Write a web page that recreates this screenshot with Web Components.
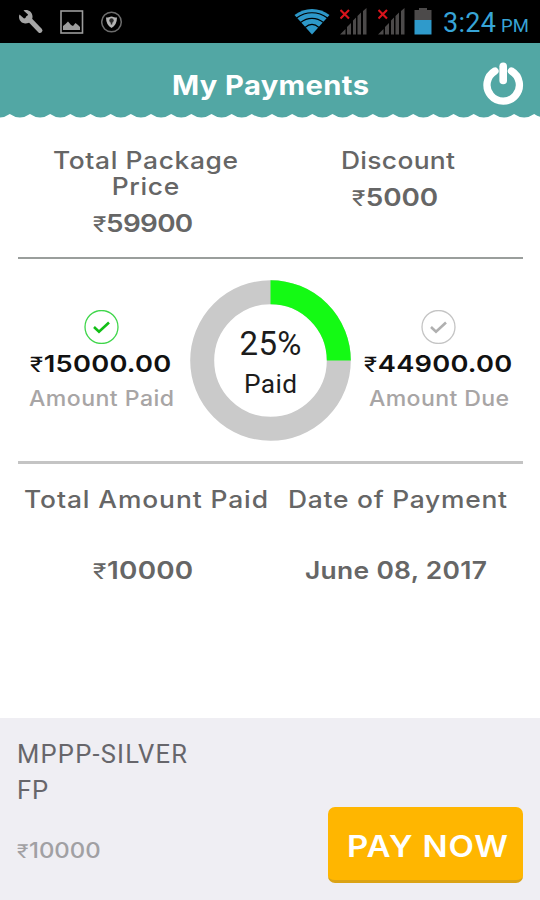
<!DOCTYPE html>
<html lang="en">
<head>
<meta charset="utf-8">
<title>My Payments</title>
<style>
  body {
    margin: 0;
    background: #fff;
    font-family: Inter, "Liberation Sans", sans-serif;
    color: #666;
  }
</style>
</head>
<body>
<payments-page></payments-page>

<script>
// A short text, tracked out so that its longest line fills the given width
class FitText extends HTMLElement {
  constructor() {
    super();
    this.attachShadow({ mode: 'open' });
  }

  connectedCallback() {
    const width = Number(this.getAttribute('width'));
    const stretch = Number(this.getAttribute('stretch') || 1);
    this.shadowRoot.innerHTML = `
      <style>
        :host {
          display: block;
          width: ${width}px;
          text-align: center;
        }
        div { display: flex; }
        span {
          display: block;
          flex: none;
          white-space: pre;
          transform: scaleX(${stretch});
          transform-origin: 0 50%;
        }
      </style>
      <div><span><slot></slot></span></div>
    `;
    const span = this.shadowRoot.querySelector('span');
    const longest = Math.max(...this.textContent.split('\n').map(line => line.length));
    const natural = span.getBoundingClientRect().width / stretch;
    span.style.letterSpacing = (width / stretch - natural) / (longest - 1) + 'px';
  }
}

// Currency sign, lighter and smaller than the digits
class RupeeSign extends HTMLElement {
  constructor() {
    super();
    this.attachShadow({ mode: 'open' });
  }

  connectedCallback() {
    this.shadowRoot.innerHTML = `<style>
        :host {
          margin-right: 0.5px;
          font-family: Roboto, "Noto Sans", sans-serif;
          font-size: 0.92em;
          font-weight: 400;
        }
      </style><slot></slot>`;
  }
}

class StatusBar extends HTMLElement {
  constructor() {
    super();
    this.attachShadow({ mode: 'open' });
  }

  connectedCallback() {
    const signal = `
      <svg width="28" height="28" viewBox="0 0 28 28">
        <path d="M0 26.500L5.500 21V26.500ZM7 19L11 15V26.500H7ZM13 12.500L16 9.500V26.500H13ZM17.500 8L21 4.500V26.500H17.500ZM23 3L26.500 0V26.500H23Z" fill="#4c4a4a"/>
        <path d="M0.500 2L9 10.500M9 2L0.500 10.500" stroke="#d8141c" stroke-width="2.100"/>
      </svg>`;

    this.shadowRoot.innerHTML = `
      <style>
        :host {
          display: flex;
          box-sizing: border-box;
          height: 43px;
          padding: 0 11px 0 18px;
          background: #000;
          color: #37a4d6;
          font-family: Roboto, sans-serif;
        }
        svg { display: block; margin-top: 8px; }
        .left, .right { display: flex; }
        .left { gap: 16px; }
        .right { margin-left: auto; }
        .time { display: flex; align-items: baseline; line-height: 46px; font-size: 27px; }
        .pm { font-size: 18.500px; margin-left: 5px; }
      </style>
      <div class="left">
        <svg width="26" height="28" viewBox="0 0 26 28">
          <path d="M10 10L22 22.500" stroke="#a6a6a6" stroke-width="4.800" stroke-linecap="round"/>
          <path d="M5.500 2.500L10 6.500L9 9.500L6 10.500L1.500 6.500C0 10 2 15 7 15.500C11 16 15 12 14.500 8C14 3.500 9.500 1 5.500 2.500Z" fill="#a6a6a6"/>
        </svg>
        <svg width="24" height="28" viewBox="0 0 24 28">
          <rect x="1" y="3" width="21.500" height="22" fill="none" stroke="#9c9c9c" stroke-width="1.600"/>
          <path d="M3 22V18L5.500 16L8 13.500L11 17L13 18L15.500 15L18 17L20 19V22Z" fill="#9c9c9c"/>
        </svg>
        <svg width="24" height="28" viewBox="0 0 24 28" style="margin-left: 1px">
          <circle cx="10.500" cy="14" r="9.800" fill="none" stroke="#6c6c6c" stroke-width="1.500"/>
          <path d="M5 9.500C7 9.500 9 9 10.500 8.500C12 9 14 9.500 16 9.500C16 14.500 14 18 10.500 20C7 18 5 14.500 5 9.500Z" fill="#b4b4b4"/>
          <circle cx="10.500" cy="12.500" r="2.200" fill="#2c2c2c"/>
          <path d="M10.500 12.500V16.500" stroke="#2c2c2c" stroke-width="1.500"/>
        </svg>
      </div>
      <div class="right">
        <svg width="36" height="28" viewBox="0 0 36 28" style="margin-right: 10px">
          <path d="M0.500 7C10.500 -1 25.500 -1 35.500 7L18 26.500Z" fill="#2d98c9"/>
          <path d="M2.500 10C12 3 24 3 33.500 10M6.500 14.500C13.500 9 22.500 9 29.500 14.500M11 19.500C15.500 15.500 20.500 15.500 25 19.500" fill="none" stroke="#000" stroke-width="1.200"/>
        </svg>
        ${signal}
        <div style="width: 10px"></div>
        ${signal}
        <svg width="18" height="28" viewBox="0 0 18 28" style="margin: 8px 11px 0 8px">
          <path d="M0.500 2H5V0H13V2H17.500V12H0.500Z" fill="#4c4a4a"/>
          <path d="M0.500 12H17.500V26.500H0.500Z" fill="#2f9acb"/>
        </svg>
        <div class="time"><fit-text width="53">3:24</fit-text><fit-text class="pm" width="28">PM</fit-text></div>
      </div>
    `;
  }
}

class PageHeader extends HTMLElement {
  constructor() {
    super();
    this.attachShadow({ mode: 'open' });
  }

  connectedCallback() {
    // Scalloped bottom edge, one arc every 20px or so
    const step = 20.170;
    let edge = `M${9.800 - step} 0V1`;
    for (let i = 0; i < 28; i++) {
      const x = 9.800 + step * i;
      edge += `Q${x - step / 2} 8 ${x} 1`;
    }
    edge += 'V0Z';

    this.shadowRoot.innerHTML = `
      <style>
        :host { display: block; height: 75px; }
        .bar {
          display: grid;
          grid-template-columns: 60px 1fr 60px;
          align-items: center;
          justify-items: center;
          box-sizing: border-box;
          height: 70px;
          padding-top: 14px;
          background: #52a7a4;
          color: #fff;
          font-size: 26.500px;
          font-weight: 700;
          line-height: 56px;
        }
        .bar fit-text { grid-column: 2; }
        svg { display: block; }
        .power { margin-right: 14px; margin-top: -3px; }
      </style>
      <div class="bar">
        <fit-text width="197" stretch="1.100">${this.textContent}</fit-text>
        <svg class="power" width="44" height="46" viewBox="0 0 44 46">
          <path d="M14 10A16.200 16.200 0 1 0 30.400 10" fill="none" stroke="#fff" stroke-width="7.300" stroke-linecap="round"/>
          <path d="M22.200 5.300V19.500" stroke="#fff" stroke-width="7.600" stroke-linecap="round"/>
        </svg>
      </div>
      <svg width="540" height="5" viewBox="0 0 540 5"><path d="${edge}" fill="#52a7a4"/></svg>
    `;
  }
}

class CheckBadge extends HTMLElement {
  constructor() {
    super();
    this.attachShadow({ mode: 'open' });
  }

  connectedCallback() {
    const done = this.hasAttribute('done');
    this.shadowRoot.innerHTML = `
      <style>
        :host { display: block; height: 34px; }
        svg { display: block; }
      </style>
      <svg width="36" height="34" viewBox="0 0 36 34">
        <circle cx="17.500" cy="17" r="16.500" fill="none" stroke="${done ? '#3fd64b' : '#c4c4c4'}" stroke-width="1.300"/>
        <path d="M10 17L15 21.700L25 12.500" fill="none" stroke="${done ? '#12bf16' : '#b0b0b0'}" stroke-width="2.600"/>
      </svg>
    `;
  }
}

class PaidDonut extends HTMLElement {
  constructor() {
    super();
    this.attachShadow({ mode: 'open' });
  }

  connectedCallback() {
    const percent = Number(this.getAttribute('percent'));
    this.shadowRoot.innerHTML = `
      <style>
        :host {
          display: grid;
          width: 161px;
          height: 161px;
          color: #1c1c1c;
          font-family: Roboto, sans-serif;
        }
        svg, .label { grid-area: 1 / 1; }
        .label {
          display: flex;
          flex-direction: column;
          align-items: center;
          padding-top: 43px;
        }
        .percent { font-size: 33px; line-height: 42px; }
        .caption { font-size: 25px; line-height: 40px; }
      </style>
      <svg width="161" height="161" viewBox="0 0 161 161">
        <circle cx="80.500" cy="80.500" r="68.300" fill="none" stroke="#cacaca" stroke-width="24"/>
        <circle cx="80.500" cy="80.500" r="68.300" fill="none" stroke="#14fa14" stroke-width="24"
          pathLength="100" stroke-dasharray="${percent} 100" transform="rotate(-90 80.500 80.500)"/>
      </svg>
      <div class="label">
        <fit-text class="percent" width="62">${percent}%</fit-text>
        <fit-text class="caption" width="53" stretch="1.050">Paid</fit-text>
      </div>
    `;
  }
}

class PayButton extends HTMLElement {
  constructor() {
    super();
    this.attachShadow({ mode: 'open' });
  }

  connectedCallback() {
    this.shadowRoot.innerHTML = `
      <style>
        :host { display: block; }
        button {
          display: flex;
          justify-content: center;
          width: 195px;
          height: 76px;
          padding: 0 0 0 4px;
          border: none;
          border-bottom: 3px solid #dba315;
          border-radius: 7px;
          background: #ffb600;
          color: #fff;
          font: 600 29.500px/79px Inter, sans-serif;
          cursor: pointer;
        }
      </style>
      <button><fit-text width="161" stretch="1.120">${this.textContent}</fit-text></button>
    `;
  }
}

class PaymentsPage extends HTMLElement {
  constructor() {
    super();
    this.attachShadow({ mode: 'open' });
  }

  connectedCallback() {
    this.shadowRoot.innerHTML = `
      <style>
        :host {
          display: flex;
          flex-direction: column;
          height: 900px;
          overflow: hidden;
        }
        hr { height: 2px; margin: 0 17.500px; border: none; background: #9a9e9c; }
        hr.thick { height: 3px; background: #c4c4c4; }

        .row {
          display: grid;
          grid-template-columns: 252px 252px;
          box-sizing: border-box;
          padding: 0 18px;
          font-size: 24px;
          font-weight: 500;
        }
        .row > div, .side {
          display: flex;
          flex-direction: column;
          align-items: center;
        }
        .label { padding-left: 3px; line-height: 26px; }
        .value { font-weight: 560; line-height: 26px; }
        .prices { height: 139px; padding-top: 30px; }
        .prices .value { margin-top: 11px; }
        .payments { padding-top: 23px; }
        .payments .value { margin-top: 45px; }

        /* Paid / due either side of the chart */
        .progress {
          display: grid;
          grid-template-columns: 177px 161px 176px;
          box-sizing: border-box;
          height: 202px;
          padding: 21px 13px 0;
        }
        .side { padding-top: 30px; }
        .amount { color: #111; font-size: 23.500px; font-weight: 560; line-height: 40px; }
        .note { color: #a8a5a5; font-size: 21px; font-weight: 500; line-height: 28px; }

        footer {
          display: flex;
          justify-content: space-between;
          box-sizing: border-box;
          height: 182px;
          margin-top: auto;
          padding: 18px 17px 0 17px;
          background: #efeef3;
        }
        .plan { font-family: Roboto, sans-serif; font-size: 25.500px; line-height: 36px; color: #67666b; }
        .due { margin-top: 25px; font-size: 21px; font-weight: 500; line-height: 36px; color: #a1a0a3; }
        pay-button { margin-top: 71px; }
      </style>

      <status-bar></status-bar>
      <page-header>My Payments</page-header>

      <div class="row prices">
        <div>
          <fit-text class="label" width="185" stretch="1.100">Total Package\nPrice</fit-text>
          <fit-text class="value" width="102" stretch="1.160"><rupee-sign>₹</rupee-sign>59900</fit-text>
        </div>
        <div>
          <fit-text class="label" width="114" stretch="1.100">Discount</fit-text>
          <fit-text class="value" width="88" stretch="1.160"><rupee-sign>₹</rupee-sign>5000</fit-text>
        </div>
      </div>
      <hr>

      <div class="progress">
        <div class="side">
          <check-badge done></check-badge>
          <fit-text class="amount" width="143" stretch="1.160"><rupee-sign>₹</rupee-sign>15000.00</fit-text>
          <fit-text class="note" width="145" stretch="1.100">Amount Paid</fit-text>
        </div>
        <paid-donut percent="25"></paid-donut>
        <div class="side">
          <check-badge></check-badge>
          <fit-text class="amount" width="150" stretch="1.160"><rupee-sign>₹</rupee-sign>44900.00</fit-text>
          <fit-text class="note" width="140" stretch="1.100">Amount Due</fit-text>
        </div>
      </div>
      <hr class="thick">

      <div class="row payments">
        <div>
          <fit-text class="label" width="244" stretch="1.100">Total Amount Paid</fit-text>
          <fit-text class="value" width="102" stretch="1.160"><rupee-sign>₹</rupee-sign>10000</fit-text>
        </div>
        <div>
          <fit-text class="label" width="219" stretch="1.100">Date of Payment</fit-text>
          <fit-text class="value" width="182" stretch="1.100">June 08, 2017</fit-text>
        </div>
      </div>

      <footer>
        <div>
          <fit-text class="plan" width="170">MPPP-SILVER</fit-text>
          <fit-text class="plan" width="31">FP</fit-text>
          <fit-text class="due" width="85" stretch="1.140"><rupee-sign>₹</rupee-sign>10000</fit-text>
        </div>
        <pay-button>PAY NOW</pay-button>
      </footer>
    `;
  }
}

customElements.define('rupee-sign', RupeeSign);
customElements.define('fit-text', FitText);
customElements.define('status-bar', StatusBar);
customElements.define('page-header', PageHeader);
customElements.define('check-badge', CheckBadge);
customElements.define('paid-donut', PaidDonut);
customElements.define('pay-button', PayButton);
customElements.define('payments-page', PaymentsPage);
</script>
</body>
</html>
